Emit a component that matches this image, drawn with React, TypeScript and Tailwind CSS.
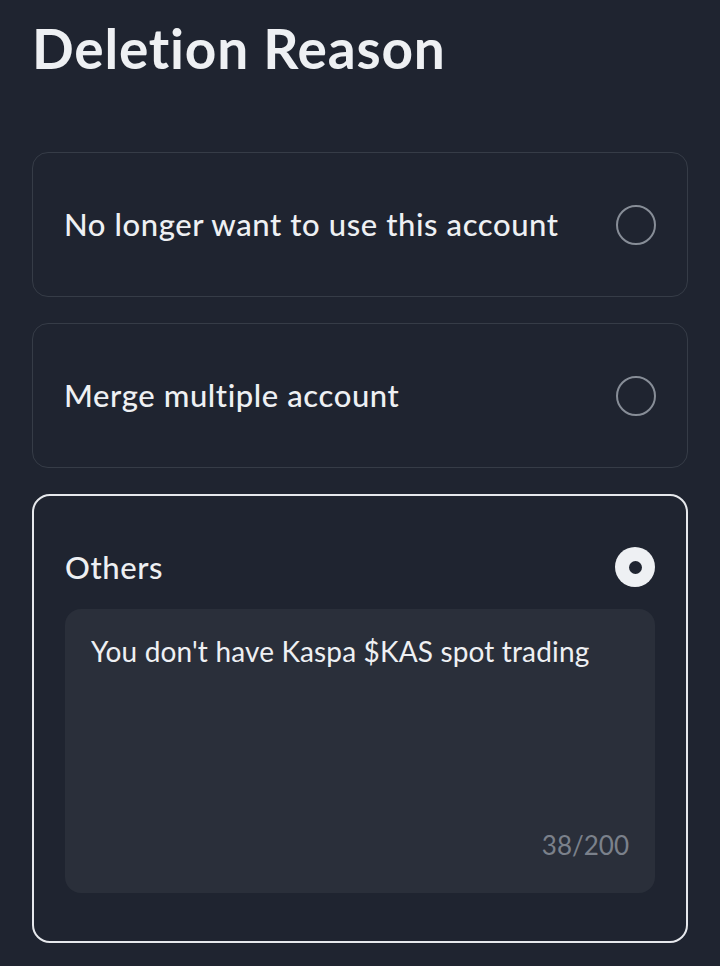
import React, { useState } from 'react';

const reasons = ['No longer want to use this account', 'Merge multiple account', 'Others'];

const Radio: React.FC<{ checked: boolean }> = ({ checked }) =>
  checked ? (
    <span className="flex h-[40px] w-[40px] shrink-0 items-center justify-center rounded-full bg-[#eef0f3]">
      <span className="h-[13px] w-[13px] rounded-full bg-[#1f2430]" />
    </span>
  ) : (
    <span className="h-[40px] w-[40px] shrink-0 rounded-full border-2 border-[#878d97]" />
  );

const App: React.FC = () => {
  const [selected, setSelected] = useState(2);
  const [text, setText] = useState("You don't have Kaspa $KAS spot trading");

  return (
    <div className="min-h-[966px] bg-[#1f2430] px-[32px] pt-[14px] font-['Lato',sans-serif] text-[#eef0f3]">
      <h1 className="text-[55px] font-bold leading-[68px] tracking-[0.8px]">Deletion Reason</h1>

      <div className="mt-[70px] flex flex-col gap-[26px]">
        {reasons.map((r, i) => {
          const active = selected === i;
          return (
            <div
              key={r}
              onClick={() => setSelected(i)}
              className={
                active
                  ? 'rounded-[18px] border-2 border-[#e6e8ec] px-[31px] pt-[48px] pb-[48px]'
                  : 'rounded-[16px] border border-[#363c47] px-[31px]'
              }
            >
              <div className={active ? 'flex items-center justify-between' : 'flex h-[143px] items-center justify-between'}>
                <span className="text-[31px] font-medium tracking-[0.6px]">{r}</span>
                <Radio checked={active} />
              </div>
              {active && (
                <div className="mt-[18px] flex h-[284px] flex-col rounded-[16px] bg-[#2a2f3a] px-[26px] pt-[24px] pb-[28px]">
                  <textarea
                    value={text}
                    maxLength={200}
                    onChange={(e) => setText(e.target.value)}
                    className="flex-1 resize-none bg-transparent text-[28px] leading-[36px] tracking-[0.15px] text-[#eef0f3] outline-none"
                  />
                  <span className="self-end text-[26px] text-[#7b818b]">{text.length}/200</span>
                </div>
              )}
            </div>
          );
        })}
      </div>
    </div>
  );
};

export default App;
